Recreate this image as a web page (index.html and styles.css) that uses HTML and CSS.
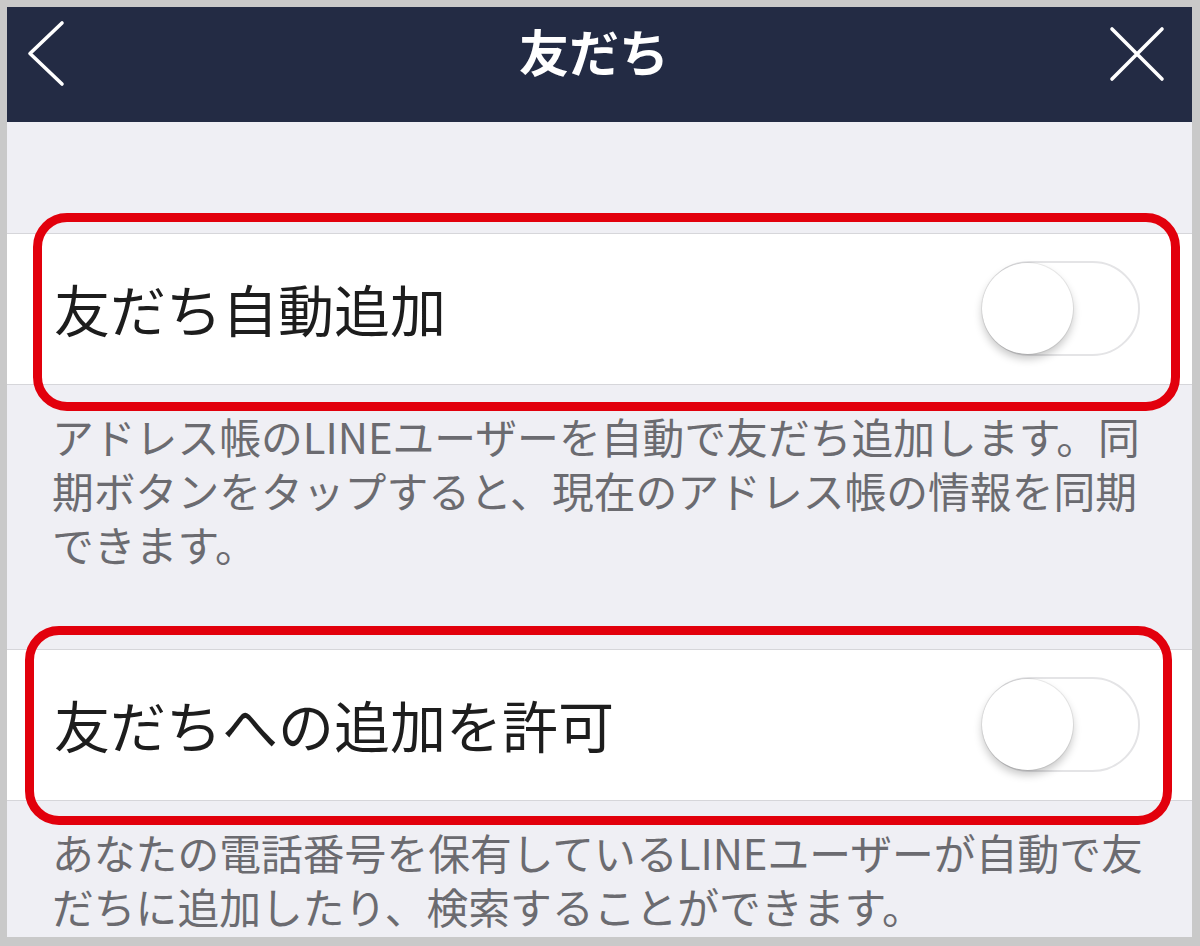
FILE: index.html
```html
<!DOCTYPE html>
<html lang="ja">
<head>
<meta charset="utf-8">
<title>友だち</title>
<link rel="stylesheet" href="styles.css">
</head>
<body>
<div class="screen">
  <header class="navbar">
    <div class="nav-left">
      <svg class="icon-back" width="44" height="70" viewBox="0 0 44 70"><path d="M35 4 L3 34.5 L35 65" fill="none" stroke="#fff" stroke-width="3.6" stroke-linecap="round" stroke-linejoin="round"/></svg>
    </div>
    <h1 class="nav-title">友だち</h1>
    <div class="nav-right">
      <svg class="icon-close" width="56" height="56" viewBox="0 0 56 56"><path d="M3 3 L53 53 M53 3 L3 53" fill="none" stroke="#fff" stroke-width="3.6" stroke-linecap="round"/></svg>
    </div>
  </header>

  <section class="group group-first">
    <div class="cell">
      <span class="cell-label">友だち自動追加</span>
      <span class="toggle"><span class="knob"></span></span>
      <span class="mark mark-a"></span>
    </div>
    <p class="footer">アドレス帳のLINEユーザーを自動で友だち追加します。同<br>期ボタンをタップすると、現在のアドレス帳の情報を同期<br>できます。</p>
  </section>

  <section class="group group-second">
    <div class="cell">
      <span class="cell-label">友だちへの追加を許可</span>
      <span class="toggle"><span class="knob"></span></span>
      <span class="mark mark-b"></span>
    </div>
    <p class="footer">あなたの電話番号を保有しているLINEユーザーが自動で友<br>だちに追加したり、検索することができます。</p>
  </section>
</div>
</body>
</html>
```

FILE: styles.css
```css
* { box-sizing: border-box; }
html, body { margin: 0; }
body {
  background: #c9c9c9;
  padding: 7px 8px 9px 7px;
  font-family: "Noto Sans CJK JP", "Noto Sans", sans-serif;
}
.screen {
  width: 1185px;
  height: 930px;
  overflow: hidden;
  background: #efeff4;
}
.navbar {
  height: 115px;
  background: #232b44;
  display: grid;
  grid-template-columns: 1fr auto 1fr;
  align-items: center;
  padding: 0 27px 22px 20px;
}
.nav-left { display: flex; justify-content: flex-start; }
.nav-right { display: flex; justify-content: flex-end; }
.icon-back, .icon-close { display: block; }
.nav-title {
  margin: 0 4px 8px 0;
  color: #fff;
  font-size: 50px;
  font-weight: 700;
  line-height: 60px;
}
.group-first { margin-top: 111px; }
.group-second { margin-top: 78px; }
.cell {
  position: relative;
  height: 152px;
  background: #fff;
  border-top: 1px solid #d6d6da;
  border-bottom: 1px solid #d6d6da;
  display: flex;
  align-items: center;
  justify-content: space-between;
  padding: 0 52px 0 47px;
}
.cell-label {
  font-size: 56px;
  color: #1d1d1d;
  line-height: 70px;
  margin-top: -2px;
}
.toggle {
  width: 158px;
  height: 95px;
  border-radius: 48px;
  border: 2px solid #e4e4e6;
  background: #fff;
  display: flex;
  align-items: center;
  margin-top: -2px;
}
.knob {
  width: 91px;
  height: 91px;
  border-radius: 50%;
  background: #fff;
  margin-left: -2px;
  box-shadow: 0 5px 9px rgba(0, 0, 0, 0.22), 0 0 0 1px rgba(0, 0, 0, 0.07);
}
.mark {
  position: absolute;
  border: 9px solid #e2000c;
  border-radius: 34px;
  pointer-events: none;
}
.mark-a { left: 26px; top: -21px; right: 12px; bottom: -27px; }
.mark-b { left: 18px; top: -24px; right: 20px; bottom: -25px; }
.footer {
  margin: 0;
  padding: 24px 40px 0 45px;
  font-size: 41.8px;
  line-height: 54px;
  color: #6b6b70;
}
```
